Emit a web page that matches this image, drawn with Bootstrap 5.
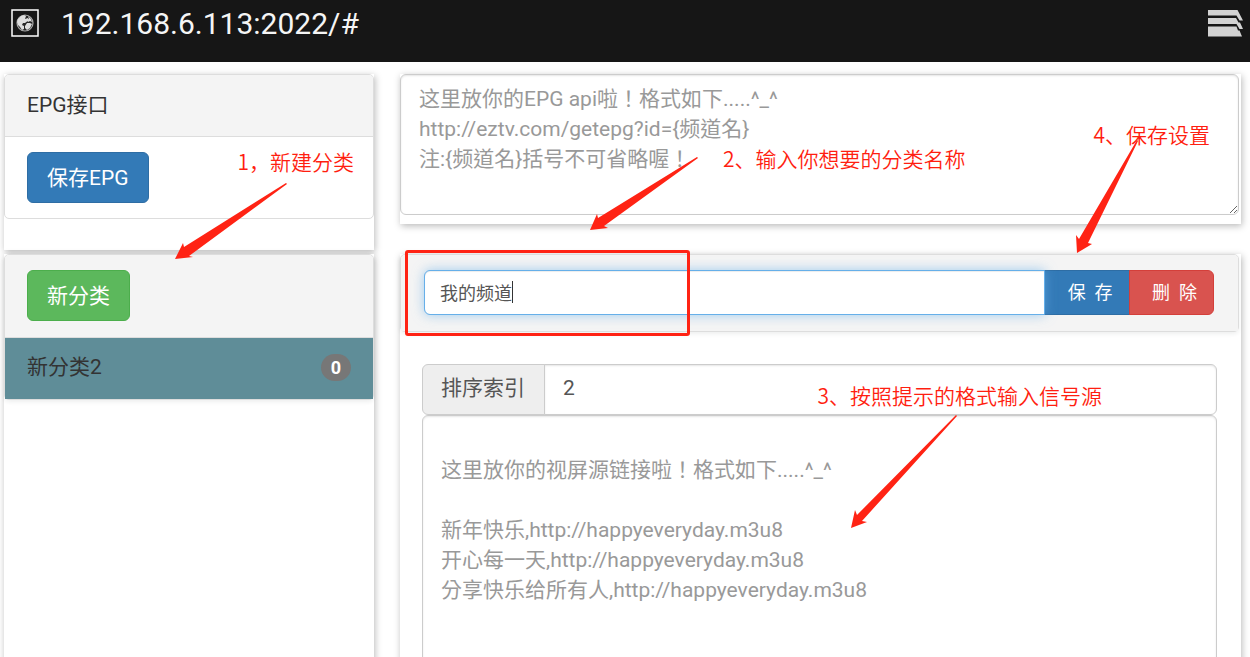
<!DOCTYPE html>
<html lang="zh-CN">
<head>
<meta charset="utf-8">
<meta name="viewport" content="width=device-width, initial-scale=1">
<title>EPG 设置</title>
<link rel="stylesheet" href="https://cdn.jsdelivr.net/npm/bootstrap@5.3.0/dist/css/bootstrap.min.css">
<script src="https://cdn.jsdelivr.net/npm/bootstrap@5.3.0/dist/js/bootstrap.bundle.min.js"></script>
<style>
  body { font: 21px/30px Roboto, "Noto Sans CJK SC", sans-serif; color: #333; background: #fff; }
  .topbar { background: #161616; height: 62px; padding: 0 7px 16px 11px; }
  .address { font-size: 30px; line-height: 46px; color: #f5f5f5; padding: 2px 0 0 22px; }
  .layout { display: grid; grid-template-columns: 370fr 841fr; column-gap: 26px; padding: 12px 9px 0 4px; }
  .sheet { background: #fff; box-shadow: 1px 2px 7px rgba(0,0,0,.28); }
  .main-sheet { padding-right: 2px; }
  .epg-panel { padding-bottom: 31px; }
  .epg-row { padding-bottom: 9px; margin-bottom: 30px; }
  .box { --bs-card-border-radius: 5px; --bs-card-inner-border-radius: 4px; --bs-card-cap-bg: #f4f4f4; --bs-card-spacer-x: 22px; --bs-card-spacer-y: 15px; color: #333; }
  .box .card-header { padding: 15px 22px 16px; }
  .box, .box .card-header { border-color: #ddd; }
  .btn { --bs-btn-padding-x: 19px; --bs-btn-padding-y: 9px; --bs-btn-border-radius: 6px; height: 51px; font-size: 21px; line-height: 30px; }
  .btn-primary { --bs-btn-bg: #337ab7; --bs-btn-border-color: #2e6da4; }
  .btn-success { --bs-btn-bg: #5cb85c; --bs-btn-border-color: #4cae4c; }
  .btn-danger { --bs-btn-bg: #d9534f; --bs-btn-border-color: #d43f3a; }
  .box .name-head { padding: 15px 24px 16px 23px; }
  .name-row .btn { font-size: 18px; line-height: 26px; padding: 8px 16px 8px 18px; height: 45px; }
  .form-control, .input-group-text { font-size: 21px; line-height: 30px; color: #555; border-color: #ccc; border-radius: 6px; }
  .form-control { box-shadow: inset 0 1px 2px rgba(0,0,0,.1); padding: 9px 18px; }
  .form-control::placeholder { color: #999; }
  textarea.form-control { font-family: Roboto, "Noto Sans CJK TC", sans-serif; }
  .name-row .form-control { height: 45px; font-size: 18px; line-height: 26px; padding: 7px 15px 9px; border-color: #66afe9; box-shadow: inset 0 1px 1px rgba(0,0,0,.075), 0 0 12px rgba(102,175,233,.6); z-index: 6; }
  .input-group-text { background: #eee; padding: 8px 19px 10px 18px; }
  .index-row .form-control, .index-row .input-group-text { height: 51px; padding-top: 8px; padding-bottom: 11px; }
  .source-form { padding: 32px 22px 0; }
  .epg-input { height: 141px; }
  .source-input { height: 420px; resize: none; }
  .category { background: #5f8d98; color: #333; padding: 14px 22px 17px; height: 61px; }
  .count { font-size: 18px; line-height: 27px; padding: 0 10px; background: #777; }
  .caret { left: 89px; top: 11px; width: 1px; height: 22px; background: #333; z-index: 7; }
  /* notes sit over the panel that they explain */
  .note { position: absolute; z-index: 20; color: #ff1e10; font: 350 21px/30px "Noto Sans CJK SC", sans-serif; white-space: nowrap; }
  .pointer { position: absolute; z-index: 20; fill: #ff2314; overflow: visible; pointer-events: none; }
  .frame { position: absolute; z-index: 20; left: 5px; top: -4px; width: 285px; height: 86px; border: 3px solid #ff2314; border-radius: 3px; pointer-events: none; }
  .note-new { right: 20px; top: 72px; }
  .arrow-new { left: 171px; top: 108px; }
  .note-name { left: 323px; top: 69px; }
  .arrow-name { left: 190px; top: 83px; }
  .note-save { right: 31px; top: 45px; }
  .arrow-save { right: 103px; top: 66px; }
  .note-source { right: 139px; top: 126px; }
  .arrow-source { right: 284px; top: 161px; }
</style>
</head>
<body class="vh-100 overflow-hidden d-flex flex-column">
<nav class="topbar d-flex align-items-center justify-content-between flex-shrink-0">
  <div class="d-flex align-items-center">
    <svg width="28" height="28" viewBox="0 0 28 28" aria-hidden="true">
      <rect x="1" y="1" width="26" height="26" fill="#161616" stroke="#fff" stroke-width="1.5"/>
      <circle cx="14" cy="14" r="8" fill="#262626" stroke="#aaa" stroke-width="1.2"/>
      <path fill="#ddd" d="M7 10l3-3 3-1 2 1-1 3 3-1 1 2-4 3-2 0-1 2 2 1 0 3-2 1-2-3-2-2-1-3zM17 7l3 3 1 3-2-1-2 1-1-2 2-1zM16 14l3 0 2 1-2 4-3 2-2-2 0-2z"/>
    </svg>
    <a href="#" class="address text-decoration-none">192.168.6.113:2022/#</a>
  </div>
  <a href="#" aria-label="菜单" class="d-flex">
    <svg width="35" height="27" viewBox="0 0 35 27" fill="#d2d2d2" aria-hidden="true">
      <path d="M0 0H29.5L35 10.500H31.500L28.500 5.500H0z"/>
      <path d="M0 8H28L30.500 12.500 32 12.500 35 19H31.500L28.500 14H0z"/>
      <path d="M0 16.500H28.500L30 20.500H31.500L34 26.500H0z"/>
    </svg>
  </a>
</nav>

<main class="layout flex-grow-1">
  <aside class="d-flex flex-column position-relative">
    <section class="sheet mb-1 epg-panel">
      <div class="card box">
        <div class="card-header">EPG接口</div>
        <div class="card-body"><button type="button" class="btn btn-primary">保存EPG</button></div>
      </div>
    </section>
    <section class="sheet flex-grow-1">
      <div class="card box shadow-sm">
        <div class="card-header"><button type="button" class="btn btn-success">新分类</button></div>
        <a href="#" class="category d-flex justify-content-between align-items-center text-decoration-none">新分类2 <span class="badge rounded-pill count">0</span></a>
      </div>
    </section>
    <span class="note note-new">1，新建分类</span>
    <svg class="pointer arrow-new" width="113" height="78" viewBox="0 0 113 78" aria-hidden="true"><path d="M111 1L112 2L14 74L18 75L0 77L8 61L9 65Z"/></svg>
  </aside>

  <div class="d-flex flex-column">
    <section class="sheet main-sheet epg-row position-relative">
      <textarea lang="zh-TW" class="form-control d-block epg-input" aria-label="EPG接口" placeholder="这里放你的EPG api啦！格式如下.....^_^&#10;http://eztv.com/getepg?id={频道名}&#10;注:{频道名}括号不可省略喔！"></textarea>
      <span class="note note-name">2、输入你想要的分类名称</span>
      <svg class="pointer arrow-name" width="108" height="73" viewBox="0 0 108 73" aria-hidden="true"><path d="M107 0L108 1L14 69L18 71L0 73L7 57L8 61Z"/></svg>
      <span class="note note-save">4、保存设置</span>
      <svg class="pointer arrow-save" width="62" height="113" viewBox="0 0 62 113" aria-hidden="true"><path d="M61 0L62 1L12 103L16 104L1 113L0 95L3 99Z"/></svg>
    </section>

    <section class="sheet main-sheet position-relative flex-grow-1">
      <div class="card box shadow-sm">
        <div class="card-header border-0 name-head">
          <div class="input-group name-row">
            <input type="text" class="form-control" value="我的频道" aria-label="分类名称">
            <span class="position-absolute caret"></span>
            <button type="button" class="btn btn-primary">&nbsp;保&nbsp;&nbsp;存</button>
            <button type="button" class="btn btn-danger">&nbsp;删&nbsp;&nbsp;除</button>
          </div>
        </div>
      </div>
      <div class="source-form">
        <div class="input-group index-row">
          <label class="input-group-text" for="sort">排序索引</label>
          <input id="sort" type="text" class="form-control" value="2">
        </div>
        <textarea lang="zh-TW" class="form-control source-input" aria-label="信号源" placeholder="&#10;这里放你的视屏源链接啦！格式如下.....^_^&#10;&#10;新年快乐,http://happyeveryday.m3u8&#10;开心每一天,http://happyeveryday.m3u8&#10;分享快乐给所有人,http://happyeveryday.m3u8"></textarea>
      </div>
      <div class="frame"></div>
      <span class="note note-source">3、按照提示的格式输入信号源</span>
      <svg class="pointer arrow-source" width="106" height="113" viewBox="0 0 106 113" aria-hidden="true"><path d="M105 0L106 1L11 106L16 107L0 113L4 95L6 100Z"/></svg>
    </section>
  </div>
</main>
</body>
</html>
